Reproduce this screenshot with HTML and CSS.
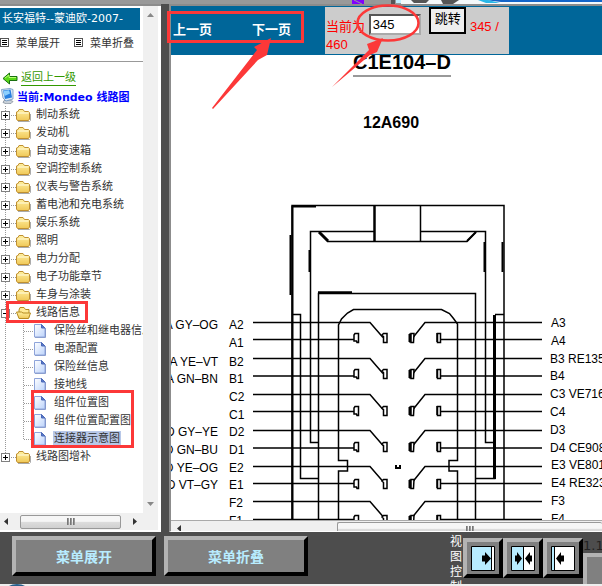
FILE: index.html
```html
<!DOCTYPE html>
<html lang="zh-CN">
<head>
  <meta charset="UTF-8">
  <meta name="viewport" content="width=device-width, initial-scale=1.0">
  <title>长安福特--蒙迪欧-2007- 线路图</title>
  <link rel="stylesheet" href="styles.css">
</head>
<body>
  <!-- shared icons -->
  <svg class="symbols" width="0" height="0">
    <defs>
      <linearGradient id="gold" x1="0" y1="0" x2="0" y2="1">
        <stop offset="0" stop-color="#fff0a0"/><stop offset="1" stop-color="#f0c858"/>
      </linearGradient>
      <linearGradient id="paper" x1="0" y1="0" x2="1" y2="1">
        <stop offset="0" stop-color="#fff"/><stop offset="1" stop-color="#bcd3fb"/>
      </linearGradient>
    </defs>
    <symbol id="plus" viewBox="0 0 9 9">
      <rect x=".5" y=".5" width="8" height="8" fill="#fff" stroke="#808080"/>
      <path d="M2 4.500h5M4.500 2v5" stroke="#000"/>
    </symbol>
    <symbol id="minus" viewBox="0 0 9 9">
      <rect x=".5" y=".5" width="8" height="8" fill="#fff" stroke="#808080"/>
      <path d="M2 4.500h5" stroke="#000"/>
    </symbol>
    <symbol id="folder" viewBox="0 0 15 13">
      <path d="M2 12.500h11.500l1-1V5" stroke="#aaa" fill="none"/>
      <path d="M.5 10V3l1.500-.5 1-2h4l1.500 2h4l1 1V10l-1 1.500H1.500z" fill="url(#gold)" stroke="#c09030"/>
      <path d="M1.500 4h11" stroke="#fffbe0"/>
    </symbol>
    <symbol id="folder-open" viewBox="0 0 15 13">
      <path d="M3 10V3l1-2.500h4l1.500 2h3.500v8" fill="#ffeb96" stroke="#b58a1e"/>
      <path d="M.5 5h5l1.500 1h7.500l-2 5.500H3z" fill="url(#gold)" stroke="#b58a1e"/>
    </symbol>
    <symbol id="page" viewBox="0 0 12 14">
      <path d="M1 13.400h10.500V4" fill="none" stroke="#7c8fc0"/>
      <path d="M.5.5h7l3.500 3.500v9H.5z" fill="url(#paper)" stroke="#8ea4da"/>
      <path d="M7.500.5v3.500H11z" fill="#5878c8" stroke="#4a68b8"/>
    </symbol>
    <symbol id="list" viewBox="0 0 9 9">
      <rect x=".5" y=".5" width="8" height="8" fill="#fff" stroke="#555"/>
      <path d="M2 2.500h5M2 4.500h5M2 6.500h5" stroke="#000"/>
    </symbol>
  </svg>

  <div class="top-strip">
    <svg width="602" height="4" viewBox="0 0 602 4">
      <path d="M352 0h12v4h-12z" fill="#8000ff"/><path d="M354 0l8 4" stroke="#999"/>
      <path d="M391 0h4v4h-4z" fill="#555"/><path d="M396 0h5v3h-5z" fill="#c0efff"/>
      <path d="M401 0h201v4H401z" fill="#f4f8fa"/>
      <path d="M411 0h18l-3 3h-12zM441 0h18l-6 4h-10z" fill="#555"/>
      <path d="M485 0h117v2H501z" fill="#1464c8"/><path d="M478 0h10l12 3h-14z" fill="#28b8e8"/>
    </svg>
  </div>

  <div class="frames">
    <div class="sidebar">
      <div class="side-main">
        <div class="side-content">
          <h1 class="car">长安福特--蒙迪欧-2007-</h1>
          <div class="menu-links">
            <a href="#"><svg width="9" height="9"><use href="#list"/></svg>菜单展开</a>
            <a href="#"><svg width="9" height="9"><use href="#list"/></svg>菜单折叠</a>
          </div>
          <div class="back">
            <svg width="16" height="13" viewBox="0 0 16 13"><path d="M1 6.500L7.500 1v3.500H15v4H7.500V12z" fill="#58d818" stroke="#187010"/><path d="M3 6l4-3v2.500h7" stroke="#b8ff70" fill="none"/></svg>
            <a href="#">返回上一级</a>
          </div>
          <div class="current">
            <svg width="13" height="16" viewBox="0 0 13 16">
              <path d="M3 12.500l6-.5 3 1.500-2 2-5 .3-3-1.300z" fill="#c8d0d8" stroke="#788490" stroke-width=".7"/>
              <path d="M.5 1.500L9 .5l3 1v9.500l-7 2L2 10z" fill="#dce8f4" stroke="#6c94c0" stroke-width=".8"/>
              <path d="M2 2.500l7.500-1 1.500 8-7 1.500z" fill="#2880e0"/><path d="M2.500 3l5.500-.7 1 3.200-5.500 2.500z" fill="#8cd0ff"/>
            </svg>
            <a href="#">当前:Mondeo 线路图</a>
          </div>
          <ul class="tree">
            <li><button class="toggle"><svg><use href="#plus"/></svg></button><a href="#"><svg class="folder"><use href="#folder"/></svg><span>制动系统</span></a></li>
            <li><button class="toggle"><svg><use href="#plus"/></svg></button><a href="#"><svg class="folder"><use href="#folder"/></svg><span>发动机</span></a></li>
            <li><button class="toggle"><svg><use href="#plus"/></svg></button><a href="#"><svg class="folder"><use href="#folder"/></svg><span>自动变速箱</span></a></li>
            <li><button class="toggle"><svg><use href="#plus"/></svg></button><a href="#"><svg class="folder"><use href="#folder"/></svg><span>空调控制系统</span></a></li>
            <li><button class="toggle"><svg><use href="#plus"/></svg></button><a href="#"><svg class="folder"><use href="#folder"/></svg><span>仪表与警告系统</span></a></li>
            <li><button class="toggle"><svg><use href="#plus"/></svg></button><a href="#"><svg class="folder"><use href="#folder"/></svg><span>蓄电池和充电系统</span></a></li>
            <li><button class="toggle"><svg><use href="#plus"/></svg></button><a href="#"><svg class="folder"><use href="#folder"/></svg><span>娱乐系统</span></a></li>
            <li><button class="toggle"><svg><use href="#plus"/></svg></button><a href="#"><svg class="folder"><use href="#folder"/></svg><span>照明</span></a></li>
            <li><button class="toggle"><svg><use href="#plus"/></svg></button><a href="#"><svg class="folder"><use href="#folder"/></svg><span>电力分配</span></a></li>
            <li><button class="toggle"><svg><use href="#plus"/></svg></button><a href="#"><svg class="folder"><use href="#folder"/></svg><span>电子功能章节</span></a></li>
            <li><button class="toggle"><svg><use href="#plus"/></svg></button><a href="#"><svg class="folder"><use href="#folder"/></svg><span>车身与涂装</span></a></li>
            <li><button class="toggle"><svg><use href="#minus"/></svg></button><a href="#"><svg class="folder"><use href="#folder-open"/></svg><span>线路信息</span></a>
              <ul class="pages">
                <li><a href="#"><svg class="page"><use href="#page"/></svg><span>保险丝和继电器信息</span></a></li>
                <li><a href="#"><svg class="page"><use href="#page"/></svg><span>电源配置</span></a></li>
                <li><a href="#"><svg class="page"><use href="#page"/></svg><span>保险丝信息</span></a></li>
                <li><a href="#"><svg class="page"><use href="#page"/></svg><span>接地线</span></a></li>
                <li><a href="#"><svg class="page"><use href="#page"/></svg><span>组件位置图</span></a></li>
                <li><a href="#"><svg class="page"><use href="#page"/></svg><span>组件位置配置图</span></a></li>
                <li><a href="#" class="selected"><svg class="page"><use href="#page"/></svg><span>连接器示意图</span></a></li>
              </ul>
            </li>
            <li><button class="toggle"><svg><use href="#plus"/></svg></button><a href="#"><svg class="folder"><use href="#folder"/></svg><span>线路图增补</span></a></li>
          </ul>
        </div>
        <div class="vscroll">
          <svg width="7" height="4" viewBox="0 0 7 4"><path d="M0 4l3.500-4L7 4z" fill="#888"/></svg>
          <svg width="7" height="4" viewBox="0 0 7 4"><path d="M0 0l3.500 4L7 0z" fill="#888"/></svg>
        </div>
      </div>
      <div class="hscroll">
        <svg width="4" height="7" viewBox="0 0 4 7"><path d="M4 0L0 3.500 4 7z" fill="#333"/></svg>
        <div class="thumb"><i></i><i></i><i></i></div>
        <svg width="4" height="7" viewBox="0 0 4 7"><path d="M0 0l4 3.500L0 7z" fill="#333"/></svg>
      </div>
    </div>

    <div class="viewer">
      <div class="toolbar">
        <div class="pager">
          <a href="#">上一页</a>
          <a href="#">下一页</a>
        </div>
        <form class="jump">
          <label for="page-no">当前为</label>
          <input id="page-no" type="text" value="345">
          <button type="button">跳转</button>
          345 / 460
        </form>
      </div>
      <div class="diagram">
        <svg width="431" height="465" viewBox="171 55 431 465">
          <g font-weight="bold">
            <text x="353" y="69" font-size="20">C1E104–D</text>
            <text x="363" y="128" font-size="16">12A690</text>
          </g>
          <path d="M353 76h98" stroke="#999" stroke-width="2"/>

          <!-- housing -->
          <g fill="none" stroke="#000" stroke-width="1.500">
            <path d="M292 520V205.500h212V520"/>
            <path d="M292.500 520V206M293 206.500h23" stroke-width="2"/>
            <path d="M290.500 235v60M502.500 242v30M309.500 250v22M484.500 242v30" stroke-width="2"/>
            <path d="M374.500 205v36" stroke-width="2.500"/>
            <path d="M420.500 205v36"/>
            <path d="M374 231.500h-63.500v211h8M420.500 231.500h65v211h9"/>
            <path d="M319 232l9 9" stroke-width="3"/>
            <path d="M327 241.500h140l9-9.500"/>
            <path d="M467 241l9-9" stroke-width="2"/>
            <path d="M318.500 520V293.500h157V520"/>
            <path d="M318 292.500h34" stroke-width="2.500"/>
            <path d="M292 314.500h8.500v164h18M504 314.500h-9M475.500 478.500h20"/>
            <path d="M494.500 315v164" stroke-width="3"/>
            <path d="M338.500 520v-49h9v-10.500h-9V325l3-6 6-6 6-3.500h88l8 4 4 5 4 5.500v136.500h-8.500V471h8.500v49"/>
          </g>

          <!-- wires -->
          <g fill="none" stroke="#000" stroke-width="1.500">
            <path d="M253 322.500h117l13 15M542 322.500H425l-12 15M253 339.500h101M542 339.500H441"/>
            <path d="M253 358.500h117l13 15M542 358.500H425l-12 15M253 376h101M542 376H441"/>
            <path d="M253 394.500h117l13 15M542 394.500H425l-12 15M253 411.500h101M542 411.500H441"/>
            <path d="M253 430.500h117l13 15M542 430.500H425l-12 15M253 448h101M542 448H441"/>
            <path d="M253 466.500h117l13 15M542 466.500H425l-12 15M253 483.500h101M542 483.500H441"/>
            <path d="M253 501.500h117l13 15M542 501.500H425l-12 15M253 519.500h101M542 519.500H441"/>
          </g>

          <!-- pins, one row per letter -->
          <defs>
            <g id="pins" fill="#fff" stroke="#000">
              <path d="M355 -4.500h3.500v9H357l-.5-1.500H354v-6z" stroke-width="1.500"/>
              <path d="M382 -3l1.500-1.500h3.500v9h-3.500v-6z" stroke-width="1.500"/>
              <path d="M409 -4h2v8h-2z" fill="#000"/><path d="M411 -4.500h3l-.5 9h-2.500z" stroke-width="1.500"/>
              <path d="M437.500 -4.500h3v9h-3z" stroke-width="1.500"/><path d="M437 -5v9" stroke-width="1.500"/>
            </g>
          </defs>
          <use href="#pins" y="338"/>
          <use href="#pins" y="374"/>
          <use href="#pins" y="411"/>
          <use href="#pins" y="447"/>
          <use href="#pins" y="484"/>
          <use href="#pins" y="520"/>
          <path d="M395 465h2v2h2v-2h2v4h-6z"/>

          <g font-size="12" text-anchor="end">
            <text x="218" y="329">A GY–OG</text>
            <text x="218" y="366">A YE–VT</text>
            <text x="218" y="383">A GN–BN</text>
            <text x="218" y="436">D GY–YE</text>
            <text x="218" y="454">D GN–BU</text>
            <text x="218" y="472">D YE–OG</text>
            <text x="218" y="489">D VT–GY</text>
          </g>
          <g font-size="12">
            <text x="229" y="329">A2</text>
            <text x="229" y="347">A1</text>
            <text x="229" y="366">B2</text>
            <text x="229" y="383">B1</text>
            <text x="229" y="401">C2</text>
            <text x="229" y="419">C1</text>
            <text x="229" y="436">D2</text>
            <text x="229" y="454">D1</text>
            <text x="229" y="472">E2</text>
            <text x="229" y="489">E1</text>
            <text x="229" y="507">F2</text>
            <text x="229" y="525">F1</text>
            <text x="551" y="327">A3</text>
            <text x="551" y="345">A4</text>
            <text x="550" y="363">B3 RE135</text>
            <text x="550" y="380">B4</text>
            <text x="550" y="398">C3 VE716</text>
            <text x="550" y="416">C4</text>
            <text x="550" y="434">D3</text>
            <text x="550" y="452">D4 CE908</text>
            <text x="551" y="469">E3 VE801</text>
            <text x="551" y="487">E4 RE323</text>
            <text x="551" y="505">F3</text>
            <text x="551" y="523">F4</text>
          </g>
        </svg>
      </div>
      <div class="hscroll hscroll-wide">
        <svg width="4" height="7" viewBox="0 0 4 7"><path d="M4 0L0 3.500 4 7z" fill="#333"/></svg>
        <div class="thumb"><i></i><i></i><i></i></div>
      </div>
    </div>
  </div>

  <div class="footer">
    <button class="big">菜单展开</button>
    <button class="big">菜单折叠</button>
    <div class="view-control">
      <span class="view-label">视图控制</span>
      <button class="icon" aria-label="左"><svg width="24" height="25" viewBox="0 0 24 25"><path d="M.5.5h23v24H.5z" fill="#fff" stroke="#000"/><path d="M1 1h19v23H1z" fill="#b8ecff"/><path d="M20.500 0v25" stroke="#000"/><path d="M11 9.500h3V6l6 6.500-6 6.500v-3.500h-3z"/></svg></button>
      <button class="icon" aria-label="中"><svg width="24" height="25" viewBox="0 0 24 25"><path d="M.5.5h23v24H.5z" fill="#fff" stroke="#000"/><path d="M1 1h11v23H1z" fill="#b8ecff"/><path d="M12.500 0v25" stroke="#000"/><path d="M4 9.500h2V6l5 6.500-5 6.500v-3.500H4zM21 9.500h-2V6l-5 6.500 5 6.500v-3.500h2z"/></svg></button>
      <button class="icon" aria-label="右"><svg width="24" height="25" viewBox="0 0 24 25"><path d="M.5.5h23v24H.5z" fill="#fff" stroke="#000"/><path d="M1 1h2v23H1z" fill="#b8ecff"/><path d="M3.500 0v25" stroke="#000"/><path d="M13 9.500h-3V6l-5 6.500 5 6.500v-3.500h3z"/></svg></button>
      <div class="zoom"><span>1.1(</span><button aria-label="缩放"></button></div>
    </div>
  </div>
  <div class="bottom-strip">
    <svg width="40" height="2" viewBox="0 0 40 2"><path d="M9 2q3-2 8-2t8 2z" fill="#28608c"/></svg>
  </div>

  <!-- red marks over the page -->
  <svg class="marks" width="602" height="586" viewBox="0 0 602 586">
    <g fill="none" stroke="#fc3838" stroke-width="3">
      <rect x="168.500" y="12.500" width="134" height="29"/>
      <rect x="7.500" y="302.500" width="79" height="19"/>
      <rect x="32.500" y="391.500" width="100" height="55"/>
      <ellipse cx="388" cy="23" rx="30.500" ry="17.500" stroke-width="2.500"/>
    </g>
    <path d="M212 108l45-58-3-3 17-9-4 17-9 5-45 49z" fill="#fc3838"/>
    <path d="M332 87l37-37-2-6 16-6-6 14-7 3z" fill="#fc3838"/>
  </svg>
</body>
</html>
```
FILE: styles.css
```css
* {
  margin: 0;
  padding: 0;
  box-sizing: border-box;
}

body {
  position: relative;
  display: flex;
  flex-direction: column;
  height: 100vh;
  overflow: hidden;
  background-color: #4d4d4d;
  font-family: "DejaVu Sans", "Noto Sans CJK SC", sans-serif;
  font-size: 11px;
  color: #333;
}

svg {
  display: block;
  flex: none;
}

a {
  color: inherit;
  text-decoration: none;
}

button {
  cursor: pointer;
}

.symbols {
  position: absolute;
}

.top-strip {
  flex: none;
  height: 4px;
  overflow: hidden;
  background-color: #999;
}

.frames {
  display: flex;
  flex: 1;
  gap: 8px;
  min-height: 0;
}

/* left frame */
.sidebar {
  display: flex;
  flex-direction: column;
  flex: none;
  width: 161px;
  padding-right: 3px;
  border-top: 2px solid #8c8c8c;
  border-bottom: 2px solid #fff;
  background-color: #fff;
}

.side-main {
  display: flex;
  flex: 1;
  min-height: 0;
}

.side-content {
  flex: 1;
  min-width: 0;
  padding-top: 2px;
  overflow: hidden;
  white-space: nowrap;
}

.car {
  margin-right: 3px;
  padding-left: 2px;
  line-height: 22px;
  background-color: #069;
  color: #fff;
  font-size: 11px;
  font-weight: normal;
}

.menu-links {
  display: flex;
  gap: 14px;
  height: 32px;
  padding-bottom: 7px;
  border-bottom: 1px solid #999;
}

.menu-links a {
  display: flex;
  align-items: center;
  gap: 7px;
}

.back {
  display: flex;
  align-items: center;
  gap: 3px;
  padding: 8px 0 0 2px;
  line-height: 16px;
}

.back a {
  border-bottom: 1px solid #390;
  color: #390;
  line-height: 15px;
}

.current {
  display: flex;
  align-items: center;
  gap: 3px;
  height: 20px;
  padding-left: 1px;
  color: #00f;
  font-weight: bold;
}

.tree,
.pages {
  list-style: none;
}

.tree {
  background: repeating-linear-gradient(#999 0 1px, transparent 1px 2px) 5px 0 / 1px calc(100% - 9px) no-repeat;
}

.tree > li {
  display: flex;
  flex-wrap: wrap;
  align-items: center;
  padding-left: 1px;
}

.toggle {
  width: 9px;
  height: 9px;
  border: 0;
  background: none;
}

.toggle svg {
  width: 9px;
  height: 9px;
}

.tree a {
  display: flex;
  align-items: center;
  gap: 4px;
  height: 18px;
  padding-left: 6px;
  background: repeating-linear-gradient(90deg, #999 0 1px, transparent 1px 2px) 1px 9px / 5px 1px no-repeat;
}

.tree a span {
  padding: 0 1px;
  line-height: 16px;
}

.folder {
  width: 15px;
  height: 13px;
}

.pages {
  width: 100%;
  margin-left: 22px;
  background: repeating-linear-gradient(#999 0 1px, transparent 1px 2px) 0 0 / 1px calc(100% - 9px) no-repeat;
}

.pages a {
  gap: 7px;
  padding-left: 11px;
  background-size: 10px 1px;
}

.page {
  width: 12px;
  height: 14px;
}

.pages .selected span {
  background-color: #b8c8e8;
}

/* scrollbars */
.vscroll {
  display: flex;
  flex-direction: column;
  align-items: center;
  justify-content: space-between;
  flex: none;
  width: 15px;
  padding: 7px 0;
  background-color: #f0f0f0;
}

.hscroll {
  display: flex;
  align-items: center;
  flex: none;
  gap: 12px;
  height: 17px;
  padding: 1px 21px 1px 4px;
  background-color: #f0f0f0;
}

.thumb {
  display: flex;
  align-items: center;
  justify-content: center;
  flex: 1;
  gap: 1px;
  height: 14px;
  border: 1px solid #999;
  border-radius: 2px;
  background: linear-gradient(#f6f6f6 0 45%, #ddd 50%, #d0d0d0);
}

.thumb i {
  width: 2px;
  height: 7px;
  background: linear-gradient(90deg, #666, #aaa);
}

/* right frame */
.viewer {
  display: flex;
  flex-direction: column;
  flex: 1;
  min-width: 0;
  border-top: 2px solid #8c8c8c;
  border-left: 2px solid #8c8c8c;
  border-bottom: 1px solid #fff;
  background-color: #fff;
}

.toolbar {
  display: flex;
  gap: 34px;
  flex: none;
  padding: 1px 0;
  background-color: #069;
}

.pager {
  display: flex;
  gap: 40px;
  padding: 13px 0 0 2px;
  color: #fff;
  font-size: 13px;
  font-weight: bold;
  line-height: 20px;
}

.jump {
  width: 184px;
  height: 47px;
  padding-left: 1px;
  background-color: #ccc;
  color: #f00;
  font-family: "Liberation Sans", "Noto Sans CJK SC", sans-serif;
  font-size: 13px;
  line-height: 18px;
}

.jump input {
  width: 52px;
  height: 21px;
  padding: 0 2px;
  border: 2px inset #aaa;
  background-color: #fff;
  font: inherit;
  vertical-align: 2px;
}

.jump button {
  width: 37px;
  height: 27px;
  margin-left: 5px;
  padding-bottom: 3px;
  border: 2px solid #000;
  background-color: #eee;
  font: inherit;
  line-height: 18px;
  vertical-align: text-bottom;
}

.diagram {
  flex: 1;
  min-height: 0;
  overflow: hidden;
  font-family: "Liberation Sans", sans-serif;
}

.hscroll-wide {
  gap: 156px;
  height: 11px;
  padding: 1px 0 0 6px;
  overflow: hidden;
  align-items: flex-start;
  border-top: 1px solid #aaa;
}

.hscroll-wide svg {
  margin-top: 3px;
}

.hscroll-wide .thumb {
  border-right: 0;
}

/* bottom bar */
.footer {
  display: flex;
  align-items: flex-start;
  flex: none;
  gap: 8px;
  height: 52px;
  padding: 4px 0 0 12px;
  overflow: hidden;
}

.big {
  width: 144px;
  height: 40px;
  border: 4px solid;
  border-color: #b3b3b3 #000 #000 #b3b3b3;
  background-color: #808080;
  color: #b8ecff;
  font-family: "Noto Sans CJK SC", sans-serif;
  font-size: 14px;
  font-weight: bold;
}

.view-control {
  display: flex;
  align-items: flex-start;
  margin-left: auto;
  padding-top: 2px;
}

.view-label {
  width: 13px;
  margin-top: -3px;
  color: #fff;
  font-size: 12px;
  line-height: 15px;
}

.icon {
  display: flex;
  align-items: center;
  justify-content: center;
  width: 40px;
  height: 40px;
  padding: 0;
  border: 4px solid;
  border-color: #b3b3b3 #000 #000 #b3b3b3;
  background-color: #808080;
}

.zoom {
  width: 19px;
  overflow: hidden;
  color: #222;
  font-size: 13px;
  line-height: 15px;
}

.zoom button {
  display: block;
  width: 40px;
  height: 40px;
  border: 4px solid #b3b3b3;
  background-color: #808080;
}

.bottom-strip {
  flex: none;
  height: 2px;
  background-color: #eee;
}

.marks {
  position: absolute;
  top: 0;
  left: 0;
  pointer-events: none;
}
```
